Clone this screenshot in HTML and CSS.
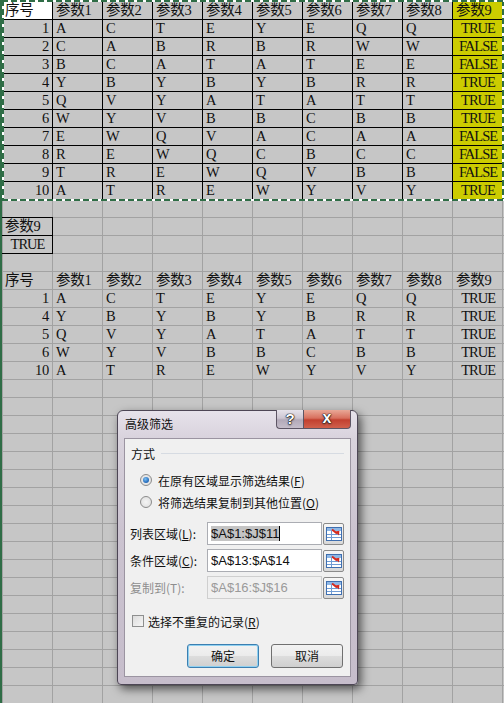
FILE: index.html
```html
<!DOCTYPE html>
<html>
<head>
<meta charset="utf-8">
<title>高级筛选</title>
<link rel="stylesheet" href="styles.css">
</head>
<body>
<div class="sheet">
  <div class="row bd"><div class="c active">序号</div><div class="c">参数1</div><div class="c">参数2</div><div class="c">参数3</div><div class="c">参数4</div><div class="c">参数5</div><div class="c">参数6</div><div class="c">参数7</div><div class="c">参数8</div><div class="c yel">参数9</div></div>
  <div class="row bd"><div class="c n">1</div><div class="c">A</div><div class="c">C</div><div class="c">T</div><div class="c">E</div><div class="c">Y</div><div class="c">E</div><div class="c">Q</div><div class="c">Q</div><div class="c yel m">TRUE</div></div>
  <div class="row bd"><div class="c n">2</div><div class="c">C</div><div class="c">A</div><div class="c">B</div><div class="c">R</div><div class="c">B</div><div class="c">R</div><div class="c">W</div><div class="c">W</div><div class="c yel m">FALSE</div></div>
  <div class="row bd"><div class="c n">3</div><div class="c">B</div><div class="c">C</div><div class="c">A</div><div class="c">T</div><div class="c">A</div><div class="c">T</div><div class="c">E</div><div class="c">E</div><div class="c yel m">FALSE</div></div>
  <div class="row bd"><div class="c n">4</div><div class="c">Y</div><div class="c">B</div><div class="c">Y</div><div class="c">B</div><div class="c">Y</div><div class="c">B</div><div class="c">R</div><div class="c">R</div><div class="c yel m">TRUE</div></div>
  <div class="row bd"><div class="c n">5</div><div class="c">Q</div><div class="c">V</div><div class="c">Y</div><div class="c">A</div><div class="c">T</div><div class="c">A</div><div class="c">T</div><div class="c">T</div><div class="c yel m">TRUE</div></div>
  <div class="row bd"><div class="c n">6</div><div class="c">W</div><div class="c">Y</div><div class="c">V</div><div class="c">B</div><div class="c">B</div><div class="c">C</div><div class="c">B</div><div class="c">B</div><div class="c yel m">TRUE</div></div>
  <div class="row bd"><div class="c n">7</div><div class="c">E</div><div class="c">W</div><div class="c">Q</div><div class="c">V</div><div class="c">A</div><div class="c">C</div><div class="c">A</div><div class="c">A</div><div class="c yel m">FALSE</div></div>
  <div class="row bd"><div class="c n">8</div><div class="c">R</div><div class="c">E</div><div class="c">W</div><div class="c">Q</div><div class="c">C</div><div class="c">B</div><div class="c">C</div><div class="c">C</div><div class="c yel m">FALSE</div></div>
  <div class="row bd"><div class="c n">9</div><div class="c">T</div><div class="c">R</div><div class="c">E</div><div class="c">W</div><div class="c">Q</div><div class="c">V</div><div class="c">B</div><div class="c">B</div><div class="c yel m">FALSE</div></div>
  <div class="row bd"><div class="c n">10</div><div class="c">A</div><div class="c">T</div><div class="c">R</div><div class="c">E</div><div class="c">W</div><div class="c">Y</div><div class="c">V</div><div class="c">Y</div><div class="c yel m">TRUE</div></div>
  <div class="row"></div>
  <div class="row"><div class="c box boxtop">参数9</div></div>
  <div class="row"><div class="c box m">TRUE</div></div>
  <div class="row"></div>
  <div class="row"><div class="c">序号</div><div class="c">参数1</div><div class="c">参数2</div><div class="c">参数3</div><div class="c">参数4</div><div class="c">参数5</div><div class="c">参数6</div><div class="c">参数7</div><div class="c">参数8</div><div class="c">参数9</div></div>
  <div class="row"><div class="c n2">1</div><div class="c">A</div><div class="c">C</div><div class="c">T</div><div class="c">E</div><div class="c">Y</div><div class="c">E</div><div class="c">Q</div><div class="c">Q</div><div class="c r">TRUE</div></div>
  <div class="row"><div class="c n2">4</div><div class="c">Y</div><div class="c">B</div><div class="c">Y</div><div class="c">B</div><div class="c">Y</div><div class="c">B</div><div class="c">R</div><div class="c">R</div><div class="c r">TRUE</div></div>
  <div class="row"><div class="c n2">5</div><div class="c">Q</div><div class="c">V</div><div class="c">Y</div><div class="c">A</div><div class="c">T</div><div class="c">A</div><div class="c">T</div><div class="c">T</div><div class="c r">TRUE</div></div>
  <div class="row"><div class="c n2">6</div><div class="c">W</div><div class="c">Y</div><div class="c">V</div><div class="c">B</div><div class="c">B</div><div class="c">C</div><div class="c">B</div><div class="c">B</div><div class="c r">TRUE</div></div>
  <div class="row"><div class="c n2">10</div><div class="c">A</div><div class="c">T</div><div class="c">R</div><div class="c">E</div><div class="c">W</div><div class="c">Y</div><div class="c">V</div><div class="c">Y</div><div class="c r">TRUE</div></div>
</div>
<div class="ants"></div>

<div class="dialog">
  <div class="titlebar">
    <div class="title">高级筛选</div>
    <div class="caption">
      <div class="qbtn">?</div>
      <div class="xbtn">x</div>
    </div>
  </div>
  <div class="client">
    <div class="grp"><span>方式</span><div class="grpline"></div></div>
    <div class="opt first"><div class="radio on"></div><span>在原有区域显示筛选结果(<u>F</u>)</span></div>
    <div class="opt"><div class="radio"></div><span>将筛选结果复制到其他位置(<u>O</u>)</span></div>
    <div class="field f1">
      <div class="lbl">列表区域(<u>L</u>):</div>
      <div class="inp"><span class="sel">$A$1:$J$11</span><span class="caret"></span></div>
      <div class="ref"><svg width="16" height="14" viewBox="0 0 16 14"><rect x="0.5" y="0.5" width="15" height="13" fill="#fff" stroke="#3f6fb0"/><rect x="1" y="1" width="14" height="3" fill="#8fb8e6"/><path d="M1 7.5H15M1 10.5H15M5.5 4V13" stroke="#6f9bd4" fill="none"/><path d="M6 2.5L11 6.5" stroke="#d42a1e" stroke-width="2"/><path d="M9 4.5L13 8.5L13.4 3.8Z" fill="#d42a1e"/></svg></div>
    </div>
    <div class="field">
      <div class="lbl">条件区域(<u>C</u>):</div>
      <div class="inp">$A$13:$A$14</div>
      <div class="ref"><svg width="16" height="14" viewBox="0 0 16 14"><rect x="0.5" y="0.5" width="15" height="13" fill="#fff" stroke="#3f6fb0"/><rect x="1" y="1" width="14" height="3" fill="#8fb8e6"/><path d="M1 7.5H15M1 10.5H15M5.5 4V13" stroke="#6f9bd4" fill="none"/><path d="M6 2.5L11 6.5" stroke="#d42a1e" stroke-width="2"/><path d="M9 4.5L13 8.5L13.4 3.8Z" fill="#d42a1e"/></svg></div>
    </div>
    <div class="field dis">
      <div class="lbl">复制到(T):</div>
      <div class="inp">$A$16:$J$16</div>
      <div class="ref"><svg width="16" height="14" viewBox="0 0 16 14"><rect x="0.5" y="0.5" width="15" height="13" fill="#fff" stroke="#3f6fb0"/><rect x="1" y="1" width="14" height="3" fill="#8fb8e6"/><path d="M1 7.5H15M1 10.5H15M5.5 4V13" stroke="#6f9bd4" fill="none"/><path d="M6 2.5L11 6.5" stroke="#d42a1e" stroke-width="2"/><path d="M9 4.5L13 8.5L13.4 3.8Z" fill="#d42a1e"/></svg></div>
    </div>
    <div class="chkrow"><div class="chk"></div><span>选择不重复的记录(<u>R</u>)</span></div>
    <div class="btns">
      <div class="btn def">确定</div>
      <div class="btn">取消</div>
    </div>
  </div>
</div>
</body>
</html>
```

FILE: styles.css
```css
html, body {
  margin: 0;
  padding: 0;
  height: 100%;
  overflow: hidden;
}

.sheet {
  height: 703px;
  box-sizing: border-box;
  border-left: 2px solid #2f6d46;
  padding-top: 2px;
  background-color: #c6c6c6;
  background-image:
    linear-gradient(90deg, transparent 49px, #a2a2a2 49px),
    linear-gradient(180deg, transparent 17px, #a2a2a2 17px);
  background-size: 50px 100%, 100% 18px;
  background-position: 1px 0, 0 2px;
  font-family: "Liberation Serif", "Noto Sans CJK SC", serif;
  font-size: 14.5px;
  letter-spacing: -0.3px;
  color: #111;
  overflow: hidden;
}

.row {
  display: grid;
  grid-template-columns: 51px repeat(9, 50px);
  height: 18px;
}

.c {
  box-sizing: border-box;
  height: 18px;
  padding: 0 2px 0 3px;
  line-height: 17px;
  white-space: nowrap;
  overflow: hidden;
}

.bd .c {
  border-right: 1px solid #000;
  border-bottom: 1px solid #000;
}

.box {
  border-right: 1px solid #000;
  border-bottom: 1px solid #000;
}

.boxtop {
  box-shadow: 0 -1px 0 #000;
}

.active {
  background: #fff;
}

.yel {
  background: #cccc00;
}

.n {
  text-align: right;
  padding-right: 3px;
}

.n2 {
  text-align: right;
  padding-right: 4px;
}

.m {
  text-align: center;
  letter-spacing: -1px;
  padding: 0 0 0 1px;
}

.r {
  text-align: right;
  padding-right: 8px;
  letter-spacing: -1px;
}

.ants {
  position: absolute;
  left: 2px;
  top: 0;
  width: 502px;
  height: 201px;
  pointer-events: none;
  background:
    repeating-linear-gradient(90deg, #2f6d46 0 6px, #fff 6px 9px) left top / 100% 2px no-repeat,
    repeating-linear-gradient(90deg, #2f6d46 0 6px, #fff 6px 9px) left bottom / 100% 2px no-repeat,
    repeating-linear-gradient(180deg, #2f6d46 0 6px, #fff 6px 9px) left top / 2px 100% no-repeat,
    repeating-linear-gradient(180deg, #2f6d46 0 6px, #fff 6px 9px) right top / 2px 100% no-repeat;
}

/* dialog */
.dialog {
  position: absolute;
  left: 117px;
  top: 410px;
  width: 241px;
  height: 275px;
  box-sizing: border-box;
  border: 1px solid #4d4655;
  border-radius: 6px 6px 4px 4px;
  background: linear-gradient(180deg, #e6e2ea 0, #d8d2dc 28px, #cbc3d0 120px, #c6bdcb 100%);
  box-shadow: 3px 4px 10px rgba(0, 0, 0, 0.6);
  font-family: "Noto Sans CJK SC", "Liberation Sans", sans-serif;
  font-size: 12px;
  color: #111;
}

.titlebar {
  position: relative;
  height: 27px;
}

.title {
  padding-left: 7px;
  line-height: 26px;
}

.caption {
  position: absolute;
  top: -1px;
  right: 6px;
  display: flex;
}

.qbtn, .xbtn {
  box-sizing: border-box;
  height: 19px;
  border: 1px solid #5d5564;
  border-top: none;
  text-align: center;
  font-family: "Liberation Sans", sans-serif;
  font-weight: bold;
  color: #fff;
  text-shadow: 0 0 1px #111, 0 0 1px #111, 0 0 1px #111, 0 1px 2px #333;
}

.qbtn {
  width: 27px;
  border-radius: 0 0 0 4px;
  border-right: none;
  background: linear-gradient(180deg, #e6e2ea 0, #cdc6d2 45%, #b2a9b8 55%, #c5bdca 100%);
  font-size: 15px;
  line-height: 18px;
}

.xbtn {
  width: 48px;
  border-radius: 0 0 4px 0;
  background: linear-gradient(180deg, #e9a897 0, #d8705e 45%, #c2402f 55%, #d0604c 100%);
  font-size: 16px;
  line-height: 16px;
}

.client {
  box-sizing: border-box;
  margin-left: 6px;
  width: 227px;
  height: 239px;
  border: 1px solid #9b94a1;
  background: #f0f0f0;
}

.grp {
  display: flex;
  align-items: center;
  height: 18px;
  margin-top: 5px;
  padding-left: 6px;
}

.grpline {
  flex: 1;
  height: 1px;
  background: #d6dbe2;
  margin: 1px 6px 0 6px;
}

.opt {
  display: flex;
  align-items: center;
  height: 22px;
  padding-left: 15px;
}

.opt.first {
  margin-top: 7px;
}

.radio {
  box-sizing: border-box;
  width: 12px;
  height: 12px;
  border-radius: 50%;
  border: 1px solid #8b8b8b;
  background: radial-gradient(circle at 50% 50%, #f4f4f4 0, #dcdcdc 100%);
  margin-right: 6px;
  display: flex;
  align-items: center;
  justify-content: center;
}

.radio.on::after {
  content: "";
  width: 6px;
  height: 6px;
  border-radius: 50%;
  background: radial-gradient(circle at 40% 35%, #7cc0f4 0, #2a71c0 60%, #1a4f96 100%);
}

.field {
  display: flex;
  align-items: center;
  height: 23px;
  margin-top: 4px;
  padding-left: 5px;
}

.field.f1 {
  margin-top: 9px;
}

.lbl {
  width: 77px;
  white-space: nowrap;
}

.inp {
  box-sizing: border-box;
  width: 115px;
  height: 23px;
  border: 1px solid #abadb3;
  background: #fff;
  padding-left: 3px;
  font-family: "Liberation Sans", sans-serif;
  font-size: 13px;
  line-height: 21px;
  color: #111;
  display: flex;
  align-items: center;
  white-space: nowrap;
}

.sel {
  background: #c4c4c4;
  line-height: 15px;
}

.caret {
  width: 1px;
  height: 15px;
  background: #000;
}

.ref {
  box-sizing: border-box;
  width: 21px;
  height: 22px;
  margin-left: 1px;
  border: 1px solid #8a8a8a;
  border-radius: 2px;
  background: linear-gradient(180deg, #f7f7f7 0, #e8e8e8 50%, #d8d8d8 100%);
  display: flex;
  align-items: center;
  justify-content: center;
}

.field.dis .lbl {
  color: #8e8e8e;
}

.field.dis .inp {
  background: #f0f0f0;
  border-color: #cfcfcf;
  color: #9a9a9a;
}

.chkrow {
  display: flex;
  align-items: center;
  height: 18px;
  margin-top: 13px;
  padding-left: 7px;
}

.chk {
  box-sizing: border-box;
  width: 12px;
  height: 12px;
  border: 1px solid #8e8f8f;
  background: linear-gradient(135deg, #dcdcdc 0, #f6f6f6 100%);
  margin-right: 4px;
}

.btns {
  display: flex;
  gap: 12px;
  margin-top: 14px;
  padding-left: 62px;
}

.btn {
  box-sizing: border-box;
  width: 72px;
  height: 24px;
  border: 1px solid #707070;
  border-radius: 3px;
  background: linear-gradient(180deg, #f2f2f2 0, #ebebeb 50%, #dddddd 51%, #cfcfcf 100%);
  text-align: center;
  line-height: 22px;
}

.btn.def {
  border-color: #3c7fb1;
  box-shadow: inset 0 0 0 1px #8fd0f0;
}
```
